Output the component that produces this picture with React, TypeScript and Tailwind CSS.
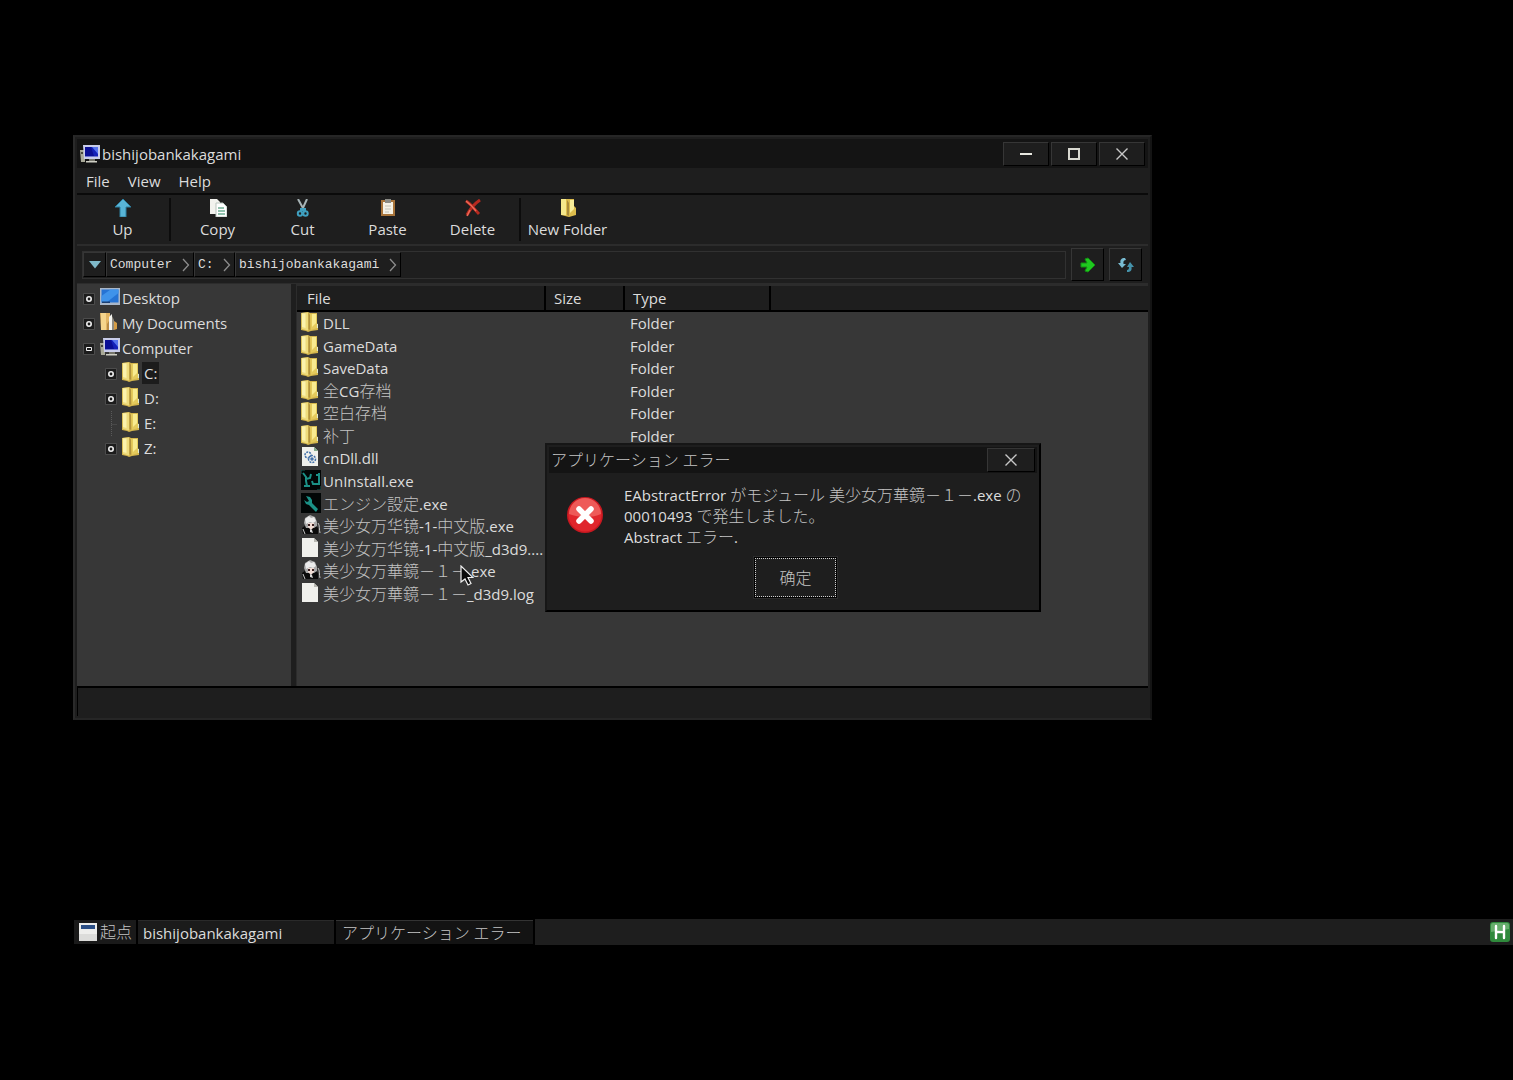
import { Fragment, useState } from 'react';
import type { ReactNode } from 'react';

type IconName = 'folder' | 'dll' | 'uninstall' | 'wrench' | 'girl' | 'file';

interface FileItem {
  name: string;
  icon: IconName;
  type?: string;
}

interface TreeItem {
  label: string;
  icon: ReactNode;
  child?: boolean;
  state?: 'open' | 'closed';
  selected?: boolean;
}

const files: FileItem[] = [
  { name: 'DLL', icon: 'folder', type: 'Folder' },
  { name: 'GameData', icon: 'folder', type: 'Folder' },
  { name: 'SaveData', icon: 'folder', type: 'Folder' },
  { name: '全CG存档', icon: 'folder', type: 'Folder' },
  { name: '空白存档', icon: 'folder', type: 'Folder' },
  { name: '补丁', icon: 'folder', type: 'Folder' },
  { name: 'cnDll.dll', icon: 'dll' },
  { name: 'UnInstall.exe', icon: 'uninstall' },
  { name: 'エンジン設定.exe', icon: 'wrench' },
  { name: '美少女万华镜-1-中文版.exe', icon: 'girl' },
  { name: '美少女万华镜-1-中文版_d3d9....', icon: 'file' },
  { name: '美少女万華鏡－１－.exe', icon: 'girl' },
  { name: '美少女万華鏡－１－_d3d9.log', icon: 'file' }
];

const raised = 'border border-t-[#363636] border-l-[#363636] border-r-black border-b-black bg-[#1e1e1e]';

// CJK runs are set one step larger than the latin text around them
function Mixed({ text }: { text: string }) {
  const parts = text.split(/([\u3000-\u9fff\uff00-\uffef]+)/);
  return (
    <>
      {parts.map((part, i) =>
        i % 2 ? (
          <span key={i} className="text-[16px] font-light text-[#c4c4c4]">{part}</span>
        ) : (
          <Fragment key={i}>{part}</Fragment>
        )
      )}
    </>
  );
}

function FolderIcon() {
  return (
    <svg width="18" height="20" viewBox="0 0 18 20" className="shrink-0">
      <path d="M0 1l7-1 2 1h7v10l1 2v5l-7 1-3 1-2-1-5-1z" fill="#d4b64c" />
      <path d="M0.500 1L7 .5v18L1 17z" fill="#efdc7c" />
      <path d="M1 1.500h3.500V16L1 15z" fill="#fbf2ac" />
      <path d="M9 2h7v14l-6 2z" fill="#e4ca5c" />
      <path d="M11 2h4v9l-4 4z" fill="#f8eb90" />
      <path d="M7.500 1L9 3v15l-1.500-1z" fill="#b0923e" />
      <path d="M16 12h1v4h-1z" fill="#dfe8d0" />
    </svg>
  );
}

function ComputerIcon() {
  return (
    <svg width="20" height="20" viewBox="0 0 20 20" className="shrink-0">
      <path d="M0 6h5v12H1z" fill="#a9a998" />
      <path d="M1 8h2v2H1z" fill="#45453c" />
      <path d="M3 1h17v14H4z" fill="#c9cdea" />
      <path d="M5 3h13v9.500H5z" fill="#1420b8" />
      <path d="M5 3h6l3 9H5z" fill="#0a0e94" />
      <path d="M12 3h6v7z" fill="#5573ee" />
      <path d="M9 15h6v2H9z" fill="#77776c" />
      <path d="M6 17h11v1.500H6z" fill="#cfcfc4" />
    </svg>
  );
}

function DesktopIcon() {
  return (
    <svg width="20" height="18" viewBox="0 0 20 18" className="shrink-0">
      <path d="M0 0h20v17H0z" fill="#a9b7c9" />
      <path d="M1.500 1.500h17v13h-17z" fill="#2573d4" />
      <path d="M1.500 8l9-6.500h8V5l-12 9.500h-5z" fill="#3f93ea" />
      <path d="M2 13.500h8V15H2z" fill="#1b3f73" />
    </svg>
  );
}

function DocumentsIcon() {
  return (
    <svg width="18" height="20" viewBox="0 0 18 20" className="shrink-0">
      <path d="M0 1h10v17H1z" fill="#e3b563" />
      <path d="M1 1h5v17H1z" fill="#f5d58c" />
      <path d="M9 5l3-3v16H9z" fill="#f3f3ee" />
      <path d="M12 4l2 4v10h-2z" fill="#8f8b80" />
      <path d="M14 9l3 2v6l-3 1z" fill="#d59d45" />
      <path d="M7 12l2-3v9H7z" fill="#b78a45" />
    </svg>
  );
}

function FileIcon({ name }: { name: IconName }) {
  if (name === 'folder') return <FolderIcon />;
  if (name === 'uninstall') {
    return (
      <svg width="20" height="20" viewBox="0 0 20 20" className="shrink-0">
        <path d="M0 0h20v20H0z" fill="#020606" />
        <path d="M2 3l3 4v4l1 5M5 9l4-1 1-4M3 16h6M18 3v11h-6l-1-3M15 5h4" fill="none" stroke="#1b9187" strokeWidth="2" />
        <path d="M0 4V0h4M20 16v4h-4" fill="none" stroke="#14615b" />
      </svg>
    );
  }
  if (name === 'wrench') {
    return (
      <svg width="20" height="20" viewBox="0 0 20 20" className="shrink-0">
        <path d="M0 0h20v20H0z" fill="#020606" />
        <path d="M5 3l4 1 2 3v3l6 6-2 3-7-7-3-1-2-4 3 2 2-1z" fill="#1b9187" />
      </svg>
    );
  }
  if (name === 'girl') {
    return (
      <svg width="20" height="20" viewBox="0 0 20 20" className="shrink-0">
        <path d="M1 13l4-3h9l3 3v6H2z" fill="#0b0b0b" />
        <path d="M3 8l1-5 5-3 5 2 2 5v4l-3 2H5z" fill="#a9a9a9" />
        <path d="M4 4l4-3 2 2 3-1 2 4-3 2-3-1-4 2z" fill="#ececec" />
        <path d="M7 8h6v4l-3 3-3-3z" fill="#f0dcd4" />
        <path d="M7 9h2v2H7zM11 9h2v2h-2z" fill="#3a2020" />
        <path d="M9 14l2 1 1 3-3-1z" fill="#d8d8d8" />
        <path d="M17 8c2 2 1 7 2 10M2 14l2 5" stroke="#c4c4c4" fill="none" />
      </svg>
    );
  }
  return (
    <svg width="20" height="20" viewBox="0 0 20 20" className="shrink-0">
      <path d="M1 0h12l4 4v15H1z" fill="#f0f0ec" />
      <path d="M13 0l4 4h-4z" fill={name === 'dll' ? '#7fa98a' : '#b9b9b2'} />
      {name === 'dll' && (
        <g fill="none" stroke="#3f6ea8" strokeWidth="1.500">
          <circle cx="7" cy="8" r="3" strokeDasharray="2 1" />
          <circle cx="11" cy="12" r="3.500" strokeDasharray="2 1" />
          <circle cx="11" cy="12" r="1" />
        </g>
      )}
    </svg>
  );
}

const tools: { label: string; icon: ReactNode; divider?: boolean }[] = [
  {
    label: 'Up',
    divider: true,
    icon: <path d="M9 0l8 8h-5v10H6V8H1z" fill="#58b4d6" stroke="#2d7f9f" strokeWidth="1" />
  },
  {
    label: 'Copy',
    icon: (
      <>
        <path d="M1 0h7l3 3v12H1z" fill="#f2f2ee" />
        <path d="M7 4h7l4 4v10H7z" fill="#fff" stroke="#b9c4bd" />
        <path d="M9 9h6M9 12h7M9 15h7" stroke="#6fae94" strokeWidth="1.500" />
      </>
    )
  },
  {
    label: 'Cut',
    icon: (
      <>
        <path d="M4 0l6 11M13 0L8 11" stroke="#a7b3b5" strokeWidth="2" />
        <circle cx="6" cy="14.500" r="2.200" fill="none" stroke="#3fa0c0" strokeWidth="2" />
        <circle cx="11.500" cy="14.500" r="2.200" fill="none" stroke="#3fa0c0" strokeWidth="2" />
        <path d="M6 9h6v3H6z" fill="#3fa0c0" />
      </>
    )
  },
  {
    label: 'Paste',
    icon: (
      <>
        <path d="M2 1h14v16H2z" fill="#a8743a" />
        <path d="M4 3h10v12H4z" fill="#f5f2e6" />
        <path d="M6 0h6v4H6z" fill="#8b8b85" />
        <path d="M6 7h6M6 10h6M6 13h4" stroke="#c2c2b8" />
      </>
    )
  },
  {
    label: 'Delete',
    divider: true,
    icon: (
      <>
        <path d="M2 2c5 3 9 9 13 13M16 1C10 5 6 10 3 16" stroke="#b52a20" strokeWidth="3" fill="none" />
        <path d="M2 2c4 3 7 6 10 10M6 11l-3 6" stroke="#ee6a58" strokeWidth="1.500" fill="none" />
      </>
    )
  },
  {
    label: 'New Folder',
    icon: (
      <>
        <path d="M2 0h13v7l2 2v7l-7 2-8-2z" fill="#dcbc4c" />
        <path d="M2 0h5v16H2z" fill="#f5e88c" />
        <path d="M11 1h4v9l-4 4z" fill="#f7ec98" />
        <path d="M8 1l2 3v13l-2-1z" fill="#a98c3c" />
      </>
    )
  }
];

const tree: TreeItem[] = [
  { label: 'Desktop', icon: <DesktopIcon />, state: 'closed' },
  { label: 'My Documents', icon: <DocumentsIcon />, state: 'closed' },
  { label: 'Computer', icon: <ComputerIcon />, state: 'open' },
  { label: 'C:', icon: <FolderIcon />, child: true, state: 'closed', selected: true },
  { label: 'D:', icon: <FolderIcon />, child: true, state: 'closed' },
  { label: 'E:', icon: <FolderIcon />, child: true },
  { label: 'Z:', icon: <FolderIcon />, child: true, state: 'closed' }
];

function Expander({ state }: { state?: 'open' | 'closed' }) {
  if (!state) {
    return (
      <svg width="12" height="25" viewBox="0 0 12 25" className="shrink-0">
        <path d="M6.500 0v25M6.500 13.500H12" stroke="#5a5a5a" strokeDasharray="1 1" />
      </svg>
    );
  }
  return (
    <svg width="12" height="12" viewBox="0 0 12 12" className="shrink-0">
      <path d="M.5.5h11v11H.5z" fill="#1c1c1c" stroke="#4c4c4c" />
      {state === 'closed' ? (
        <circle cx="6" cy="6" r="2.200" fill="none" stroke="#eee" strokeWidth="1.600" />
      ) : (
        <path d="M3.500 4.500h5v3h-5z" fill="none" stroke="#eee" />
      )}
    </svg>
  );
}

function CloseGlyph() {
  return (
    <svg width="14" height="14" viewBox="0 0 14 14">
      <path d="M1.500 1.500l11 11M12.500 1.500l-11 11" stroke="#c8c8c8" strokeWidth="1.400" />
    </svg>
  );
}

function Crumb({ label, className }: { label: string; className: string }) {
  return (
    <button className={`flex h-[25px] items-center justify-between pl-[3px] pr-[3px] font-['Liberation_Mono',monospace] text-[13px] ${raised} ${className}`}>
      {label}
      <svg width="8" height="14" viewBox="0 0 8 14">
        <path d="M1 1l5.500 6L1 13" fill="none" stroke="#8c8c8c" strokeWidth="1.300" />
      </svg>
    </button>
  );
}

function ExplorerWindow() {
  const [path, setPath] = useState('');

  return (
    <section className="absolute left-[73px] top-[135px] flex h-[585px] w-[1079px] flex-col border-2 border-b-[#262626] border-l-[#2a2a2a] border-r-[#141414] border-t-[#262626] bg-[#1e1e1e] p-[2px]">
      <header className="flex h-[29px] shrink-0 items-center bg-[#141414] pl-[3px] pr-[3px]">
        <ComputerIcon />
        <h1 className="flex-1 pl-[2px]">bishijobankakagami</h1>
        <div className="flex gap-[2px]">
          <button aria-label="Minimize" className={`flex h-6 w-[46px] items-center justify-center ${raised}`}>
            <svg width="12" height="12" viewBox="0 0 12 12">
              <path d="M0 6h12" stroke="#e8e8e0" strokeWidth="2" />
            </svg>
          </button>
          <button aria-label="Maximize" className={`flex h-6 w-[46px] items-center justify-center ${raised}`}>
            <svg width="12" height="12" viewBox="0 0 12 12">
              <path d="M1 1h10v10H1z" fill="none" stroke="#d8d8d0" strokeWidth="2" />
            </svg>
          </button>
          <button aria-label="Close" className={`flex h-6 w-[46px] items-center justify-center ${raised}`}>
            <CloseGlyph />
          </button>
        </div>
      </header>

      <nav className="flex h-[27px] shrink-0 items-center gap-[18px] border-b-2 border-[#0a0a0a] pl-[9px]">
        <button>File</button>
        <button>View</button>
        <button>Help</button>
      </nav>

      <div className="flex h-[49px] shrink-0 items-center pl-[3px]">
        {tools.map((tool) => (
          <Fragment key={tool.label}>
            <button className="flex h-[45px] w-[85px] flex-col items-center gap-[2px] pt-[2px]">
              <svg width="18" height="18" viewBox="0 0 18 18">{tool.icon}</svg>
              <span className="leading-[20px]">{tool.label}</span>
            </button>
            {tool.divider && <div className="mx-1 h-[43px] w-[2px] bg-[#0c0c0c]" />}
          </Fragment>
        ))}
      </div>

      <div className="flex h-[40px] shrink-0 items-center border-b border-t-2 border-[#2c2c2c] pl-[5px] pr-[6px]">
        <div className="flex h-[28px] flex-1 items-center border border-[#313131]">
          <button aria-label="History" className={`flex h-[25px] w-[23px] items-center justify-center ${raised}`}>
            <svg width="12" height="8" viewBox="0 0 12 8">
              <path d="M0 0h12L6 7.500z" fill="#7fb9c9" />
            </svg>
          </button>
          <Crumb label="Computer" className="w-[88px]" />
          <Crumb label="C:" className="w-[41px]" />
          <Crumb label="bishijobankakagami" className="w-[166px]" />
          <input aria-label="Path" value={path} onChange={(e) => setPath(e.target.value)} className="h-full min-w-0 flex-1 bg-transparent px-1 outline-none" />
        </div>
        <button aria-label="Go" className={`ml-[5px] flex h-[33px] w-[33px] items-center justify-center ${raised}`}>
          <svg width="16" height="16" viewBox="0 0 16 16">
            <path d="M1 6h6L5 2l3-1 7 7-7 7-3-1 2-4H1z" fill="#1fc81f" stroke="#129012" />
          </svg>
        </button>
        <button aria-label="Refresh" className={`ml-[5px] flex h-[33px] w-[33px] items-center justify-center ${raised}`}>
          <svg width="16" height="16" viewBox="0 0 16 16">
            <path d="M7 1C3 1 2 3 2.500 6H0l4 5 4-4H5.500C5 4 6 3 8 3z" fill="#79bcd2" />
            <path d="M9 15c4 0 5-2 4.500-5H16l-4-5-3 5h2c0 2-.5 3-2 3z" fill="#4593ab" />
          </svg>
        </button>
      </div>

      <div className="flex min-h-0 flex-1 gap-[5px]">
        <aside className="w-[214px] bg-[#373737] pt-[2px]">
          <ul>
            {tree.map((item) => (
              <li key={item.label} className={`flex h-[25px] items-center ${item.child ? 'pl-[28px]' : 'pl-[6px]'}`}>
                <Expander state={item.state} />
                <span className={`ml-[5px] flex shrink-0 pb-[3px] ${item.child ? 'w-[20px]' : 'w-[22px]'}`}>{item.icon}</span>
                <span className="pb-[2px]">
                  <span className={item.selected ? 'block bg-[#1c1c1c] px-[2px]' : item.child ? 'block px-[2px]' : 'block'}>{item.label}</span>
                </span>
              </li>
            ))}
          </ul>
        </aside>

        <main className="min-w-0 flex-1 border-l border-t-2 border-[#2c2c2c] bg-[#373737]">
          <table className="h-[319px] w-full table-fixed border-separate border-spacing-0">
            <thead>
              <tr className="h-[26px] text-left">
                <th className="w-[249px] border-b-2 border-r-2 border-black bg-[#1e1e1e] p-0 pl-[10px] font-normal">File</th>
                <th className="w-[79px] border-b-2 border-r-2 border-black bg-[#1e1e1e] p-0 pl-[8px] font-normal">Size</th>
                <th className="w-[146px] border-b-2 border-r-2 border-black bg-[#1e1e1e] p-0 pl-[8px] font-normal">Type</th>
                <th className="border-b-2 border-black bg-[#1e1e1e] p-0" />
              </tr>
            </thead>
            <tbody>
              {files.map((file) => (
                <tr key={file.name}>
                  <td className="p-0 pl-[4px]">
                    <div className="flex h-[22px] items-start whitespace-nowrap">
                      <span className="flex w-[22px] shrink-0">
                        <FileIcon name={file.icon} />
                      </span>
                      <span className="leading-[22px]">
                        <Mixed text={file.name} />
                      </span>
                    </div>
                  </td>
                  <td className="p-0" />
                  <td className="p-0 pl-[5px] leading-[22px]">{file.type}</td>
                  <td className="p-0" />
                </tr>
              ))}
            </tbody>
          </table>
        </main>
      </div>

      <footer className="h-[30px] shrink-0 border-l border-t-2 border-black" />
    </section>
  );
}

function ErrorDialog() {
  return (
    <section role="alertdialog" aria-label="アプリケーション エラー" className="absolute left-[545px] top-[443px] flex h-[169px] w-[496px] flex-col border-2 border-b-black border-l-[#161616] border-r-black border-t-[#161616] bg-[#1e1e1e] p-[2px]">
      <header className="flex h-[26px] items-center justify-between bg-[#141414] pl-[2px]">
        <h2>
          <Mixed text="アプリケーション エラー" />
        </h2>
        <button aria-label="Close" className={`mr-[2px] flex h-[24px] w-[48px] items-center justify-center ${raised}`}>
          <CloseGlyph />
        </button>
      </header>
      <div className="flex pl-[17px] pt-[12px]">
        <svg width="38" height="38" viewBox="0 0 38 38" className="mt-[11px] shrink-0">
          <circle cx="19" cy="19" r="18" fill="#c81820" />
          <circle cx="19" cy="19" r="16.500" fill="#e0262c" />
          <path d="M3 18a16 16 0 0 1 32 0c-8 4-22 4-32 0z" fill="#ee5a58" />
          <path d="M13 13l12 12M25 13L13 25" stroke="#fff" strokeWidth="5.500" strokeLinecap="round" />
        </svg>
        <p className="ml-[20px] leading-[21px]">
          <Mixed text="EAbstractError がモジュール 美少女万華鏡－１－.exe の" />
          <br />
          <Mixed text="00010493 で発生しました。" />
          <br />
          <Mixed text="Abstract エラー." />
        </p>
      </div>
      <button className="mt-[8px] ml-[204px] h-[43px] w-[85px] border border-[#2c2c2c] bg-black p-px">
        <span className="flex h-full items-center justify-center border border-dotted border-[#d0d0d0] bg-[#1e1e1e]">
          <Mixed text="确定" />
        </span>
      </button>
    </section>
  );
}

function Taskbar() {
  return (
    <footer className="ml-[74px] flex h-[26px] items-center gap-[2px]">
      <button className="flex h-[24px] w-[62px] items-center gap-[2px] bg-[#1a1a1a] pl-[4px]">
        <svg width="20" height="20" viewBox="0 0 20 20" className="shrink-0">
          <path d="M1 1h18v18H1z" fill="#eeeeec" />
          <path d="M3 3h14v4H3z" fill="#2c4f86" />
          <path d="M1 12h18v7H1z" fill="#dcdcda" />
        </svg>
        <Mixed text="起点" />
      </button>
      <button className="h-[24px] w-[196px] border-t border-[#2a2a2a] bg-[#1b1b1b] pl-[5px] text-left">bishijobankakagami</button>
      <button className="h-[24px] w-[197px] border-t border-[#333] bg-[#131313] pl-[6px] text-left">
        <Mixed text="アプリケーション エラー" />
      </button>
      <div className="flex h-full flex-1 items-center justify-end bg-[#1e1e1e] pr-[3px]">
        <svg width="20" height="20" viewBox="0 0 20 20">
          <rect width="20" height="20" rx="3" fill="#2f8a3c" />
          <path d="M1 10V3a2 2 0 0 1 2-2h14a2 2 0 0 1 2 2v4z" fill="#66ad6c" />
          <path d="M6 4v12M14 4v12M6 10h8" stroke="#fff" strokeWidth="2.400" strokeLinecap="round" />
        </svg>
      </div>
    </footer>
  );
}

export default function App() {
  return (
    <div className="relative min-h-screen overflow-hidden bg-black font-['Open_Sans','Noto_Sans_CJK_JP','Noto_Sans_CJK_SC',sans-serif] text-[15px] leading-[22px] text-[#dcdcdc]">
      <div className="h-[919px]">
        <ExplorerWindow />
        <ErrorDialog />
        <svg width="14" height="22" viewBox="0 0 14 22" className="absolute left-[460px] top-[565px]">
          <path d="M1 1v16l4-3 3 6 3-1.500-3-6h5z" fill="#0a0a0a" stroke="#f0f0f0" strokeWidth="1.200" />
        </svg>
      </div>
      <Taskbar />
    </div>
  );
}
